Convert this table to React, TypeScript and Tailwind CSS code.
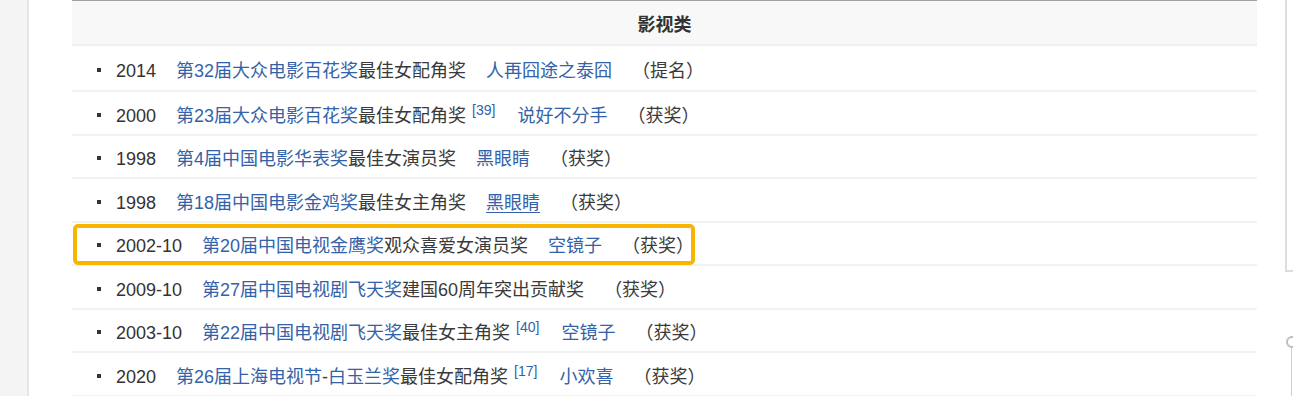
import React from 'react';

type Part = { t: string; link?: boolean; u?: boolean; sup?: string };

interface Award {
  year: string;
  parts: Part[][];
  result: string;
  highlight?: boolean;
}

const awards: Award[] = [
  {
    year: '2014',
    parts: [[{ t: '第32届大众电影百花奖', link: true }, { t: '最佳女配角奖' }], [{ t: '人再囧途之泰囧', link: true }]],
    result: '（提名）',
  },
  {
    year: '2000',
    parts: [[{ t: '第23届大众电影百花奖', link: true }, { t: '最佳女配角奖', sup: '[39]' }], [{ t: '说好不分手', link: true }]],
    result: '（获奖）',
  },
  {
    year: '1998',
    parts: [[{ t: '第4届中国电影华表奖', link: true }, { t: '最佳女演员奖' }], [{ t: '黑眼睛', link: true }]],
    result: '（获奖）',
  },
  {
    year: '1998',
    parts: [[{ t: '第18届中国电影金鸡奖', link: true }, { t: '最佳女主角奖' }], [{ t: '黑眼睛', link: true, u: true }]],
    result: '（获奖）',
  },
  {
    year: '2002-10',
    parts: [[{ t: '第20届中国电视金鹰奖', link: true }, { t: '观众喜爱女演员奖' }], [{ t: '空镜子', link: true }]],
    result: '（获奖）',
    highlight: true,
  },
  {
    year: '2009-10',
    parts: [[{ t: '第27届中国电视剧飞天奖', link: true }, { t: '建国60周年突出贡献奖' }]],
    result: '（获奖）',
  },
  {
    year: '2003-10',
    parts: [[{ t: '第22届中国电视剧飞天奖', link: true }, { t: '最佳女主角奖', sup: '[40]' }], [{ t: '空镜子', link: true }]],
    result: '（获奖）',
  },
  {
    year: '2020',
    parts: [
      [
        { t: '第26届上海电视节', link: true },
        { t: '-' },
        { t: '白玉兰奖', link: true },
        { t: '最佳女配角奖', sup: '[17]' },
      ],
      [{ t: '小欢喜', link: true }],
    ],
    result: '（获奖）',
  },
];

function Segment({ p }: { p: Part }) {
  return (
    <>
      <span className={p.link ? `text-[#3462a8] ${p.u ? 'underline underline-offset-[3px]' : ''}` : 'text-[#3a3a3a]'}>{p.t}</span>
      {p.sup && (
        <sup className="ml-[6px] mr-[2px] text-[14px] text-[#3462a8] relative -top-[7px]">{p.sup}</sup>
      )}
    </>
  );
}

function Row({ a, first }: { a: Award; first: boolean }) {
  return (
    <div
      className={`relative flex items-center pl-[25px] pt-[6px] border-b-2 border-[#f2f2f2] ${first ? 'h-[46px]' : 'h-[43.5px]'}`}
    >
      {a.highlight && (
        <div className="absolute left-[1px] top-[1px] w-[622px] h-[41px] border-4 border-[#f7b500] rounded-[5px] pointer-events-none" />
      )}
      <span className="w-1 h-1 bg-[#333] mr-[15px] -mt-[2px]" />
      <span className="text-[#333] mr-[20px]">{a.year}</span>
      {a.parts.map((grp, i) => (
        <span key={i} className="mr-[20px] whitespace-nowrap">
          {grp.map((p, j) => (
            <Segment key={j} p={p} />
          ))}
        </span>
      ))}
      <span className="text-[#3a3a3a]">{a.result}</span>
    </div>
  );
}

export default function App() {
  return (
    <div
      className="flex w-[1293px] h-[396px] overflow-hidden bg-white text-[18px] leading-none"
      style={{ fontFamily: '"Liberation Sans", "Noto Sans CJK SC", sans-serif' }}
    >
      {/* left gutter */}
      <div className="w-[29px] shrink-0 bg-[#f4f4f4] border-r-2 border-[#e6e6e6]" />

      {/* main table */}
      <div className="pl-[43px] shrink-0">
        <div className="w-[1185px] border-t border-[#a0a0a0]">
          <div className="h-[45px] flex items-center justify-center pt-[5px] bg-[#f8f8f8] border-b-2 border-[#f0f0f0]">
            <span className="font-bold text-[#333]">影视类</span>
          </div>
          {awards.map((a, i) => (
            <Row key={i} a={a} first={i === 0} />
          ))}
        </div>
      </div>

      {/* right sidebar edge */}
      <div className="flex-1 flex flex-col pl-[28px]">
        <div className="h-[274px] border-l-2 border-b-2 border-[#dcdcdc]" />
        <div className="relative mt-[64px] h-[60px]">
          <div className="absolute left-[1px] top-0 w-[12px] h-[12px] rounded-full border-2 border-[#bdbdbd]" />
          <div className="absolute left-[6px] top-[12px] w-[1px] h-[48px] bg-[#cfcfcf]" />
        </div>
      </div>
    </div>
  );
}
